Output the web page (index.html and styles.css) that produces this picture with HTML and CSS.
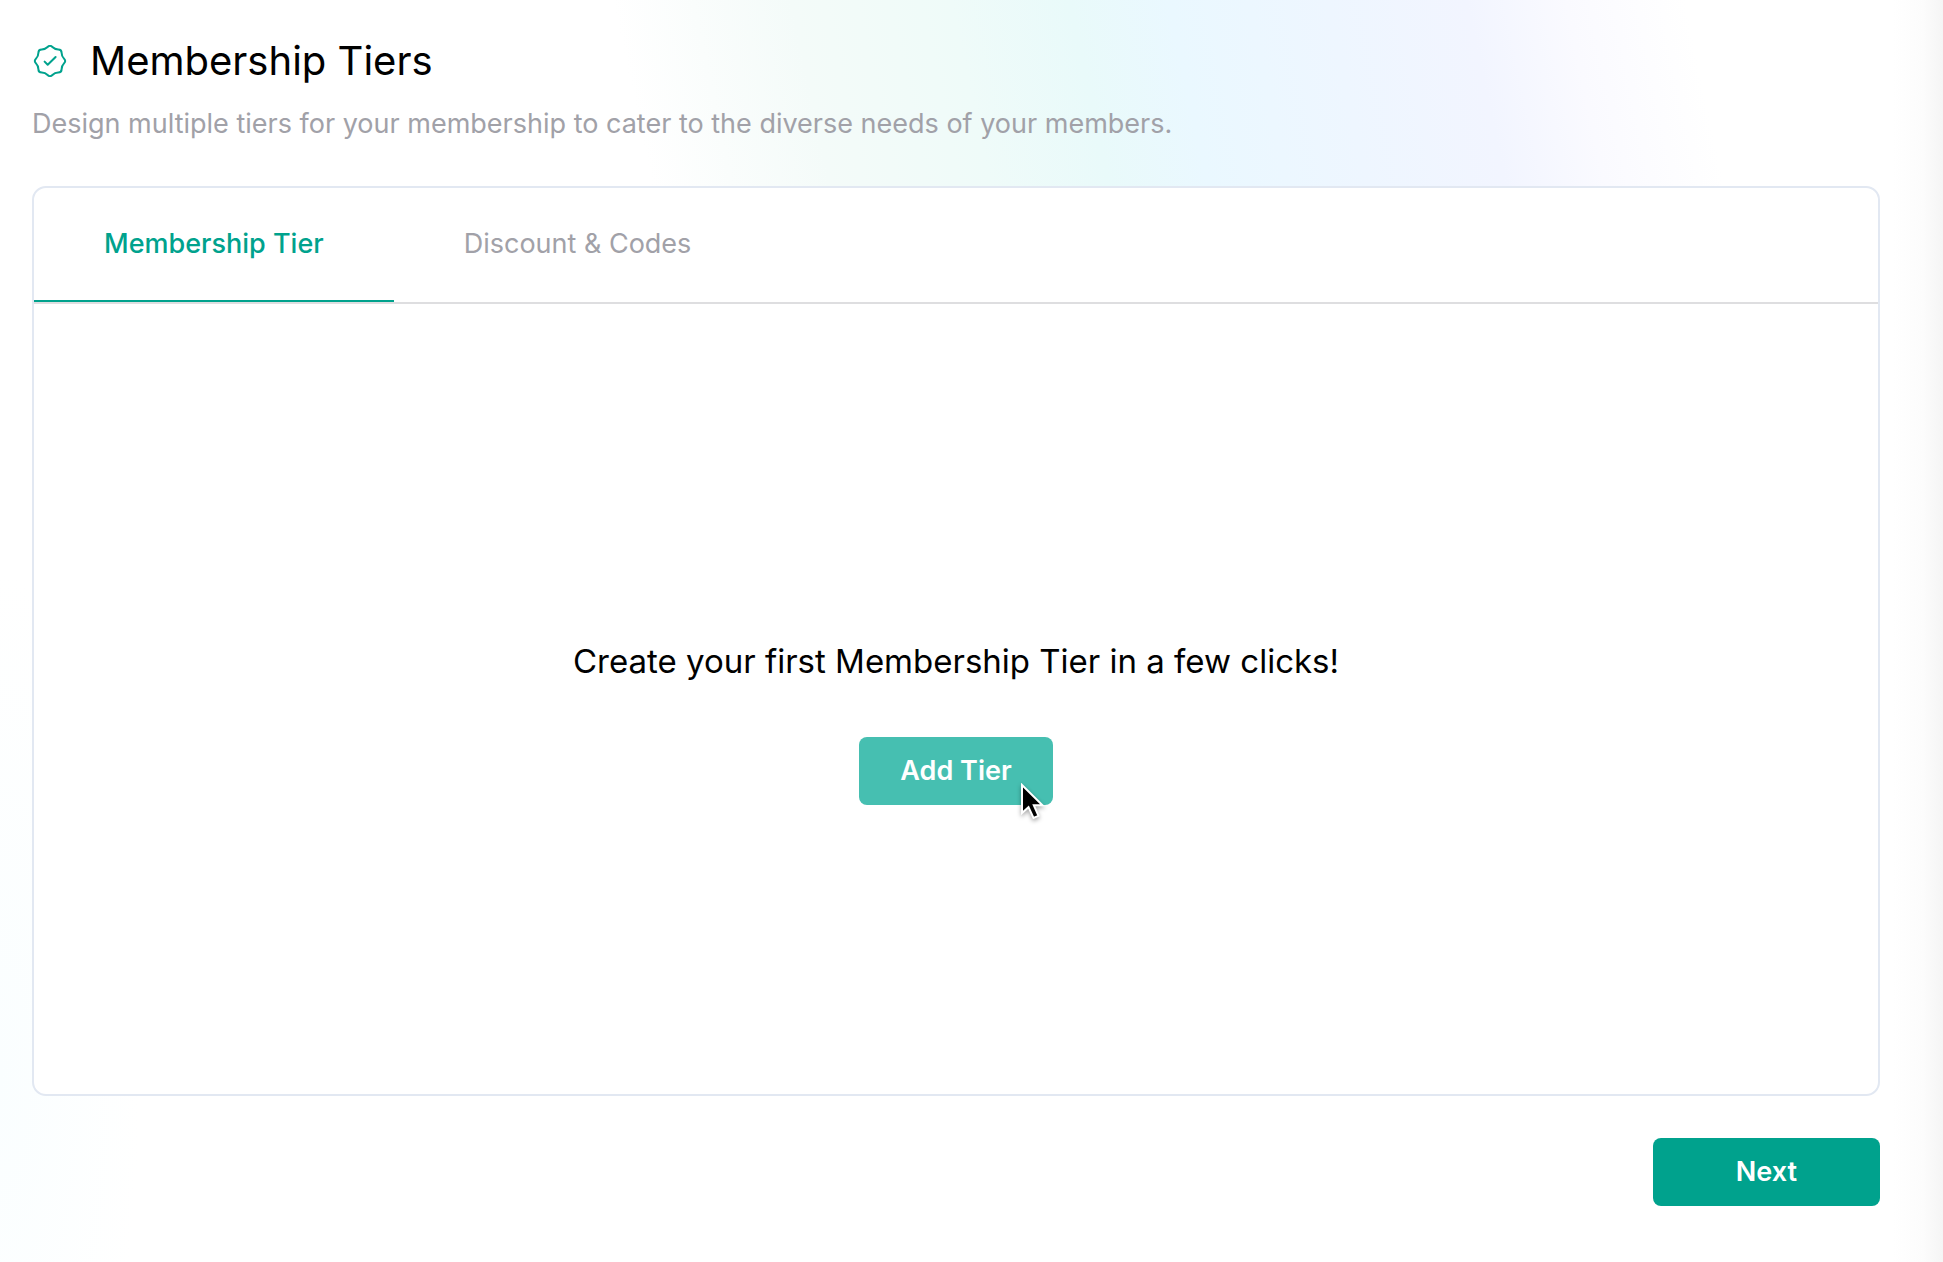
FILE: index.html
```html
<!DOCTYPE html>
<html lang="en">
<head>
  <meta charset="utf-8">
  <meta name="viewport" content="width=device-width, initial-scale=1">
  <title>Membership Tiers</title>
  <link rel="stylesheet" href="styles.css">
</head>
<body>
  <main class="page">
    <header class="page-header">
      <div class="title-row">
        <svg class="title-icon" viewBox="0 0 32 32" width="36" height="32" fill="none" stroke="currentColor" stroke-width="2" stroke-linecap="round" stroke-linejoin="round" aria-hidden="true">
          <path d="M30 13.6Q32.4 16 30 18.4Q27.6 20.8 27.6 24.2Q27.6 27.6 24.2 27.6Q20.8 27.6 18.4 30Q16 32.4 13.6 30Q11.2 27.6 7.8 27.6Q4.4 27.6 4.4 24.2Q4.4 20.8 2 18.4Q-.4 16 2 13.6Q4.4 11.2 4.4 7.8Q4.4 4.4 7.8 4.4Q11.2 4.4 13.6 2Q16 -.4 18.4 2Q20.8 4.4 24.2 4.4Q27.6 4.4 27.6 7.8Q27.6 11.2 30 13.6Z"/>
          <path d="M10.6 16.6L13.7 19.8L21.6 12"/>
        </svg>
        <h1 class="title">Membership Tiers</h1>
      </div>
      <p class="subtitle">Design multiple tiers for your membership to cater to the diverse needs of your members.</p>
    </header>

    <section class="card">
      <div class="tabs" role="tablist">
        <button class="tab tab-active" id="tab-tier" type="button" role="tab" aria-selected="true" aria-controls="panel-tier">Membership Tier</button>
        <button class="tab" type="button" role="tab" aria-selected="false">Discount &amp; Codes</button>
      </div>
      <div class="panel" id="panel-tier" role="tabpanel" aria-labelledby="tab-tier">
        <h2 class="empty-title">Create your first Membership Tier in a few clicks!</h2>
        <div class="add-wrap">
          <button class="button button-add" type="button">Add Tier</button>
          <svg class="cursor" viewBox="0 0 28 40" width="28" height="40" aria-hidden="true">
            <path d="M2 2V30L8.500 24.200L13.500 35L18.500 32.800L13.800 22.300H22.500Z" fill="#000" stroke="#fff" stroke-width="2" stroke-linejoin="miter"/>
          </svg>
        </div>
      </div>
    </section>

    <footer class="actions">
      <button class="button button-next" type="button">Next</button>
    </footer>
  </main>
</body>
</html>
```
FILE: styles.css
```css
* {
  box-sizing: border-box;
}

body {
  margin: 0;
  font-family: Inter, "Liberation Sans", sans-serif;
  font-size: 27px;
  line-height: 40px;
  color: #000;
  background: #fff;
}

.page {
  display: flex;
  flex-direction: column;
  min-height: 100vh;
  padding: 36px 63px 56px 32px;
  background:
    linear-gradient(to left, #f5f5f5, #fcfcfc 20px, rgba(255, 255, 255, 0) 50px),
    linear-gradient(78deg, #fff 33%, #fafdfc 37%, #f4fbf9 42%, #effbf9 50%, #e9fafa 56%, #eaf8ff 61%, #eef6ff 69%, #f2f5ff 76%, #fafaff 81%, #fff 87%) top / 100% 200px no-repeat,
    radial-gradient(ellipse 140px 500px at 0 85%, #fafeff, #fff);
}

.title-row {
  display: flex;
  align-items: center;
  gap: 22px;
}

.title-icon {
  flex: none;
  color: #00a28d;
}

.title {
  margin: 0;
  font-size: 40px;
  font-weight: 400;
  line-height: 50px;
}

.subtitle {
  margin: 18px 0 0;
  color: #a1a1a8;
}

.card {
  display: flex;
  flex: 1;
  flex-direction: column;
  margin-top: 42px;
  border: 2px solid #e2e8f2;
  border-radius: 14px;
  background: #fff;
}

.tabs {
  display: flex;
  border-bottom: 2px solid #dedee0;
}

.tab {
  padding: 36px 70px;
  border: 0;
  border-bottom: 2px solid transparent;
  background: none;
  font: inherit;
  color: #a1a1a8;
  cursor: pointer;
}

.tab-active {
  border-bottom-color: #00a28d;
  font-weight: 500;
  color: #00a28d;
}

.panel {
  display: flex;
  flex: 1;
  flex-direction: column;
  align-items: center;
  justify-content: center;
  gap: 56px;
  padding-top: 48px;
}

.empty-title {
  margin: 0;
  font-size: 33px;
  font-weight: 400;
  line-height: 40px;
}

.add-wrap {
  position: relative;
}

.button {
  height: 68px;
  padding: 0 41px;
  border: 0;
  border-radius: 8px;
  background: #00a28d;
  font: inherit;
  font-weight: 600;
  color: #fff;
  cursor: pointer;
}

.button-add {
  display: block;
  background: #46bfb1;
}

.cursor {
  position: absolute;
  right: 5px;
  bottom: -18px;
  filter: drop-shadow(0 2px 2px rgba(0, 0, 0, 0.35));
  pointer-events: none;
}

.actions {
  display: flex;
  justify-content: flex-end;
  margin-top: 42px;
}

.button-next {
  padding: 0 83px;
}
```
